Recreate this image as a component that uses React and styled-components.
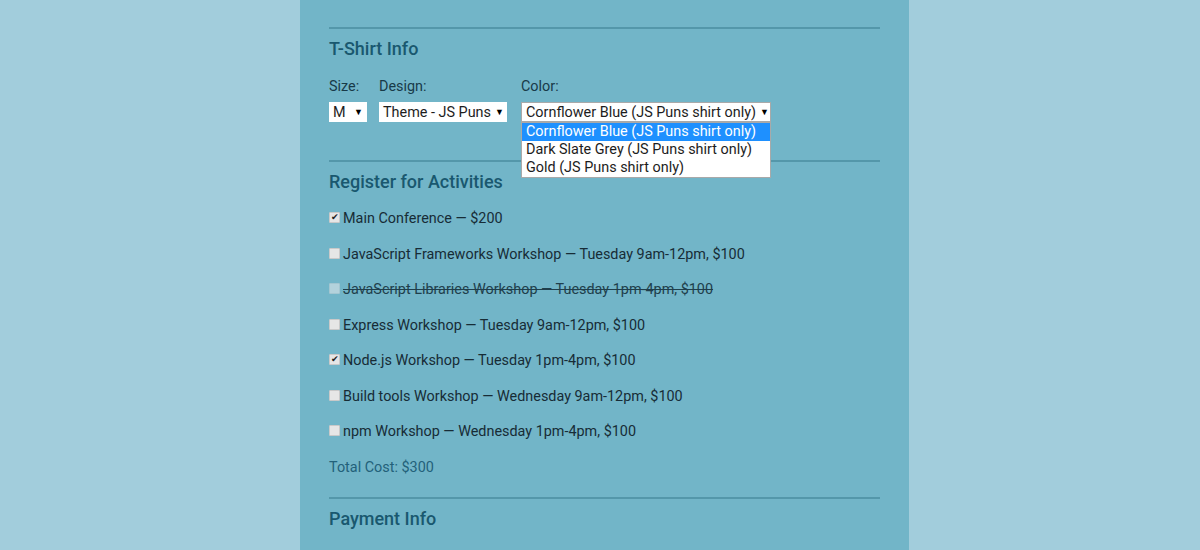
import React from "react";
import styled, { createGlobalStyle } from "styled-components";

const Global = createGlobalStyle`
  html, body { margin: 0; padding: 0; background: #a2cddc; }
  body { font-family: Roboto, "Liberation Sans", sans-serif; }
`;

const Page = styled.div`
  display: flex;
  justify-content: center;
  height: 550px;
  overflow: hidden;
`;

const Panel = styled.div`
  width: 551px;
  padding: 0 29px;
  background: #72b5c8;
  margin-left: 9px;
`;

const Section = styled.section`
  border-top: 2px solid #5497aa;
  margin-top: ${(p) => p.$top}px;
  position: relative;
`;

const Heading = styled.h2`
  margin: 9px 0 0;
  font-size: 18px;
  line-height: 21px;
  font-weight: 500;
  color: #19586f;
`;

const Fields = styled.div`
  display: flex;
  gap: 12px;
  margin-top: 20px;
`;

const Field = styled.div`
  display: flex;
  flex-direction: column;
  gap: 7px;
  position: relative;
  margin-right: ${(p) => p.$mr || 0}px;
`;

const Label = styled.span`
  font-size: 14.4px;
  line-height: 16px;
  color: #183a48;
`;

const Select = styled.div`
  display: flex;
  align-items: center;
  justify-content: space-between;
  box-sizing: border-box;
  width: ${(p) => p.$w}px;
  height: 20px;
  padding: 0 ${(p) => p.$pr || 4}px 0 4px;
  background: #fff;
  font-size: 14.4px;
  color: #1d1d1d;
  white-space: nowrap;
  border: ${(p) => (p.$bordered ? "1px solid #a9a9a9" : "none")};
`;

const Arrow = styled.span`
  font-size: 9px;
  color: #000;
  margin-left: 4px;
`;

const List = styled.ul`
  position: absolute;
  top: 43px;
  left: 0;
  width: 250px;
  margin: 0;
  padding: 0;
  list-style: none;
  background: #fff;
  border: 1px solid #a9a9a9;
  box-sizing: border-box;
  z-index: 2;
`;

const Option = styled.li`
  font-size: 14.4px;
  line-height: 18px;
  padding: 0 4px;
  color: ${(p) => (p.$active ? "#fff" : "#1d1d1d")};
  background: ${(p) => (p.$active ? "#1e90ff" : "transparent")};
`;

const Activities = styled.div`
  display: flex;
  flex-direction: column;
  gap: 19.5px;
  margin-top: 19px;
`;

const Row = styled.label`
  display: flex;
  align-items: center;
  gap: 3px;
  font-size: 14.4px;
  line-height: 16px;
  color: ${(p) => (p.$disabled ? "#1f3f4c" : "#172c36")};
  text-decoration: ${(p) => (p.$disabled ? "line-through" : "none")};
`;

const Box = styled.span`
  width: 11px;
  height: 11px;
  margin-top: -3px;
  box-sizing: border-box;
  background: ${(p) => (p.$disabled ? "#b3d2dc" : "#e6e6e6")};
  border: 1px solid ${(p) => (p.$disabled ? "#a3c6d1" : "#c9c9c9")};
  border-radius: 1px;
  display: flex;
  align-items: center;
  justify-content: center;
  font-size: 9px;
  line-height: 1;
  color: #222;
  text-decoration: none;
`;

const Total = styled.div`
  margin-top: 19.5px;
  font-size: 14.4px;
  line-height: 16px;
  color: #23617a;
`;

const activities = [
  { t: "Main Conference — $200", c: true },
  { t: "JavaScript Frameworks Workshop — Tuesday 9am-12pm, $100" },
  { t: "JavaScript Libraries Workshop — Tuesday 1pm-4pm, $100", d: true },
  { t: "Express Workshop — Tuesday 9am-12pm, $100" },
  { t: "Node.js Workshop — Tuesday 1pm-4pm, $100", c: true },
  { t: "Build tools Workshop — Wednesday 9am-12pm, $100" },
  { t: "npm Workshop — Wednesday 1pm-4pm, $100" },
];

export default function App() {
  return (
    <Page>
      <Global />
      <Panel>
        <Section $top={27}>
          <Heading>T-Shirt Info</Heading>
          <Fields>
            <Field>
              <Label>Size:</Label>
              <Select $w={38}>
                M <Arrow>▼</Arrow>
              </Select>
            </Field>
            <Field $mr={2}>
              <Label>Design:</Label>
              <Select $w={128}>
                Theme - JS Puns <Arrow>▼</Arrow>
              </Select>
            </Field>
            <Field>
              <Label>Color:</Label>
              <Select $w={250} $pr={2} $bordered>
                Cornflower Blue (JS Puns shirt only) <Arrow>▼</Arrow>
              </Select>
              <List>
                <Option $active>Cornflower Blue (JS Puns shirt only)</Option>
                <Option>Dark Slate Grey (JS Puns shirt only)</Option>
                <Option>Gold (JS Puns shirt only)</Option>
              </List>
            </Field>
          </Fields>
        </Section>
        <Section $top={38}>
          <Heading>Register for Activities</Heading>
          <Activities>
            {activities.map((a) => (
              <Row key={a.t} $disabled={a.d}>
                <Box $disabled={a.d}>{a.c ? "✔" : ""}</Box>
                {a.t}
              </Row>
            ))}
          </Activities>
          <Total>Total Cost: $300</Total>
        </Section>
        <Section $top={21}>
          <Heading>Payment Info</Heading>
        </Section>
      </Panel>
    </Page>
  );
}
